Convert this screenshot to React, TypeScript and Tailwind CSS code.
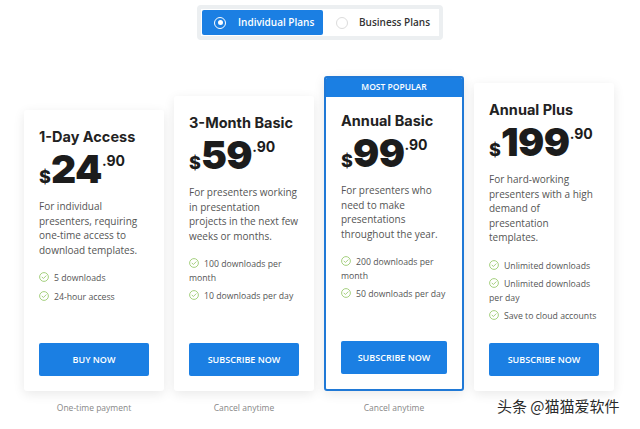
import type { ReactNode } from 'react'

type Plan = {
  title: string
  price: string
  desc: string
  features: string[]
  cta: string
  height: string
  footer: string
  popular?: boolean
}

const plans: Plan[] = [
  {
    title: '1-Day Access',
    price: '24',
    desc: 'For individual presenters, requiring one-time access to download templates.',
    features: ['5 downloads', '24-hour access'],
    cta: 'BUY NOW',
    height: 'h-[281px]',
    footer: 'One-time payment',
  },
  {
    title: '3-Month Basic',
    price: '59',
    desc: 'For presenters working in presentation projects in the next few weeks or months.',
    features: ['100 downloads per month', '10 downloads per day'],
    cta: 'SUBSCRIBE NOW',
    height: 'h-[295px]',
    footer: 'Cancel anytime',
  },
  {
    title: 'Annual Basic',
    price: '99',
    desc: 'For presenters who need to make presentations throughout the year.',
    features: ['200 downloads per month', '50 downloads per day'],
    cta: 'SUBSCRIBE NOW',
    height: 'h-[315px]',
    footer: 'Cancel anytime',
    popular: true,
  },
  {
    title: 'Annual Plus',
    price: '199',
    desc: 'For hard-working presenters with a high demand of presentation templates.',
    features: ['Unlimited downloads', 'Unlimited downloads per day', 'Save to cloud accounts'],
    cta: 'SUBSCRIBE NOW',
    height: 'h-[308px]',
    footer: '',
  },
]

const body = "font-['Open_Sans',_'Liberation_Sans',_sans-serif]"
const head = "font-['Inter',_'Liberation_Sans',_sans-serif]"

function Check() {
  return (
    <svg
      width="10"
      height="10"
      viewBox="0 0 10 10"
      className="mr-[5px] inline-block align-[-1px]"
      fill="none"
      stroke="#9ccb72"
      strokeWidth="0.9"
    >
      <circle cx="5" cy="5" r="4.4" />
      <path d="M3 5.1l1.4 1.4L7.1 3.8" strokeLinecap="round" strokeLinejoin="round" />
    </svg>
  )
}

function Radio({ active }: { active?: boolean }) {
  return active ? (
    <span className="flex h-[12px] w-[12px] items-center justify-center rounded-full border-[1.5px] border-white">
      <span className="h-[5px] w-[5px] rounded-full bg-white" />
    </span>
  ) : (
    <span className="h-[12px] w-[12px] rounded-full border border-[#dcdcdc]" />
  )
}

function CardBody({ plan, children }: { plan: Plan; children?: ReactNode }) {
  return (
    <div className={`flex flex-1 flex-col px-[15px] pb-[15px] ${plan.popular ? 'pt-[15px]' : 'pt-[18px]'}`}>
      <h3 className={`${head} text-[14.5px] font-bold leading-[18px] text-[#222]`}>{plan.title}</h3>

      {/* price: dollar sign on the baseline, cents up top */}
      <div className={`${head} mt-[3px] flex items-baseline leading-none text-[#1c1c1c]`}>
        <span className="text-[18px] font-extrabold">$</span>
        <span className="text-[39px] font-black tracking-[-0.5px]">{plan.price}</span>
        <span className="mt-[5px] self-start text-[14px] font-bold">.90</span>
      </div>

      <p className={`${body} mt-[11px] text-[10px] leading-[14.5px] text-[#555]`}>{plan.desc}</p>

      <ul className={`${body} mt-[15px] flex flex-col gap-[5px] text-[8.7px] leading-[13.5px] text-[#555]`}>
        {plan.features.map((f) => (
          <li key={f}>
            <Check />
            {f}
          </li>
        ))}
      </ul>

      <button
        type="button"
        className={`${body} mt-auto flex h-[33px] w-full items-center justify-center rounded-[2px] bg-[#1b7fe3] text-[9px] font-semibold text-white`}
      >
        {plan.cta}
      </button>
      {children}
    </div>
  )
}

export default function App() {
  return (
    <div className="h-[429px] w-[640px] overflow-hidden bg-white">
      {/* plan type toggle */}
      <div className="flex justify-center pt-[5px]">
        <div className={`${body} flex rounded-[4px] border-[4px] border-[#eceff1] bg-white p-px`}>
          <div className="flex h-[25px] w-[121px] items-center gap-[12px] rounded-[2px] bg-[#1b7fe3] pl-[12px]">
            <Radio active />
            <span className="text-[10px] font-semibold text-white">Individual Plans</span>
          </div>
          <div className="flex w-[115px] items-center gap-[11px] pl-[13px]">
            <Radio />
            <span className="text-[10px] font-semibold text-[#333]">Business Plans</span>
          </div>
        </div>
      </div>

      {/* cards */}
      <div className="mt-[36px] flex items-end gap-[10px] pl-[24px]">
        {plans.map((plan) =>
          plan.popular ? (
            <div
              key={plan.title}
              className={`${plan.height} flex w-[140px] flex-col overflow-hidden rounded-[3px] border-2 border-[#2079d6] bg-white shadow-[0_3px_12px_rgba(0,0,0,0.09)]`}
            >
              <div className={`${body} flex h-[19px] items-center justify-center bg-[#1b7fe3] text-[8.5px] font-semibold text-white`}>
                MOST POPULAR
              </div>
              <CardBody plan={plan} />
            </div>
          ) : (
            <div
              key={plan.title}
              className={`${plan.height} flex w-[140px] flex-col rounded-[3px] bg-white shadow-[0_3px_12px_rgba(0,0,0,0.09)]`}
            >
              <CardBody plan={plan} />
            </div>
          )
        )}
      </div>

      {/* footnotes */}
      <div className="mt-[11px] flex items-start gap-[10px] pl-[24px]">
        {plans.map((plan) =>
          plan.footer ? (
            <p key={plan.title} className={`${body} w-[140px] text-center text-[8.5px] leading-[12px] text-[#888]`}>
              {plan.footer}
            </p>
          ) : (
            <p
              key={plan.title}
              className="-mt-[6px] w-[140px] whitespace-nowrap pl-[23px] font-['Noto_Sans_CJK_SC',_sans-serif] text-[15px] leading-[20px] text-[#2a2a2a]"
            >
              头条 @猫猫爱软件
            </p>
          )
        )}
      </div>
    </div>
  )
}
